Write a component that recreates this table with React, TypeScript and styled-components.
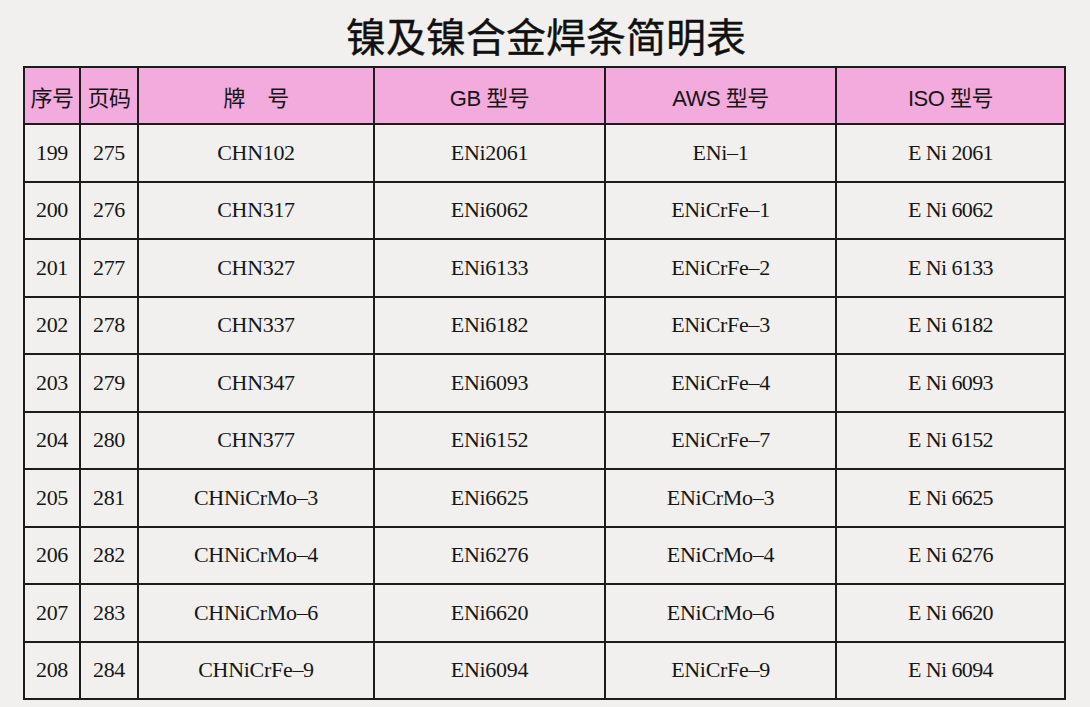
import styled, { createGlobalStyle } from 'styled-components'

const GlobalStyle = createGlobalStyle`
  html, body {
    margin: 0;
    padding: 0;
    background: #f1f0ee;
  }
`

const Page = styled.div`
  width: 1090px;
  height: 707px;
  background: #f1f0ee;
  color: #161616;
  overflow: hidden;
`

const Title = styled.h1`
  margin: 0;
  height: 62px;
  padding-top: 4px;
  display: flex;
  align-items: center;
  justify-content: center;
  padding-left: 2px;
  font-family: 'Noto Sans CJK SC', sans-serif;
  font-weight: 400;
  font-size: 40px;
  -webkit-text-stroke: 0.35px #111;
  color: #111;
`

const Table = styled.table`
  margin-left: 23px;
  width: 1041px;
  border-collapse: collapse;
  table-layout: fixed;
  border: 2px solid #1c1c1c;
`

const HeadCell = styled.th`
  height: 55px;
  padding: 0;
  background: #f3aadc;
  border: 2px solid #1c1c1c;
  font-family: 'Liberation Sans', 'Noto Sans CJK SC', sans-serif;
  font-weight: 400;
  font-size: 22px;
  letter-spacing: -0.5px;
  text-align: center;
  white-space: pre;
`

const Cell = styled.td<{ $tight?: boolean }>`
  height: 55.5px;
  padding: 0;
  border: 2px solid #1c1c1c;
  font-family: 'Liberation Serif', serif;
  font-size: 22px;
  text-align: center;
  letter-spacing: ${({ $tight }) => ($tight ? '-0.6px' : '-0.3px')};
`

const columns = [
  { title: '序号', width: 56 },
  { title: '页码', width: 58 },
  { title: '牌    号', width: 236 },
  { title: 'GB 型号', width: 231 },
  { title: 'AWS 型号', width: 231 },
  { title: 'ISO 型号', width: 229 },
]

const rows = [
  ['199', '275', 'CHN102', 'ENi2061', 'ENi–1', 'E Ni 2061'],
  ['200', '276', 'CHN317', 'ENi6062', 'ENiCrFe–1', 'E Ni 6062'],
  ['201', '277', 'CHN327', 'ENi6133', 'ENiCrFe–2', 'E Ni 6133'],
  ['202', '278', 'CHN337', 'ENi6182', 'ENiCrFe–3', 'E Ni 6182'],
  ['203', '279', 'CHN347', 'ENi6093', 'ENiCrFe–4', 'E Ni 6093'],
  ['204', '280', 'CHN377', 'ENi6152', 'ENiCrFe–7', 'E Ni 6152'],
  ['205', '281', 'CHNiCrMo–3', 'ENi6625', 'ENiCrMo–3', 'E Ni 6625'],
  ['206', '282', 'CHNiCrMo–4', 'ENi6276', 'ENiCrMo–4', 'E Ni 6276'],
  ['207', '283', 'CHNiCrMo–6', 'ENi6620', 'ENiCrMo–6', 'E Ni 6620'],
  ['208', '284', 'CHNiCrFe–9', 'ENi6094', 'ENiCrFe–9', 'E Ni 6094'],
]

export default function App() {
  return (
    <Page>
      <GlobalStyle />
      <Title>镍及镍合金焊条简明表</Title>
      <Table>
        <colgroup>
          {columns.map((c) => (
            <col key={c.title} style={{ width: c.width }} />
          ))}
        </colgroup>
        <thead>
          <tr>
            {columns.map((c) => (
              <HeadCell key={c.title}>{c.title}</HeadCell>
            ))}
          </tr>
        </thead>
        <tbody>
          {rows.map((r) => (
            <tr key={r[0]}>
              {r.map((v, i) => (
                <Cell key={i} $tight={i === 5}>
                  {v}
                </Cell>
              ))}
            </tr>
          ))}
        </tbody>
      </Table>
    </Page>
  )
}
